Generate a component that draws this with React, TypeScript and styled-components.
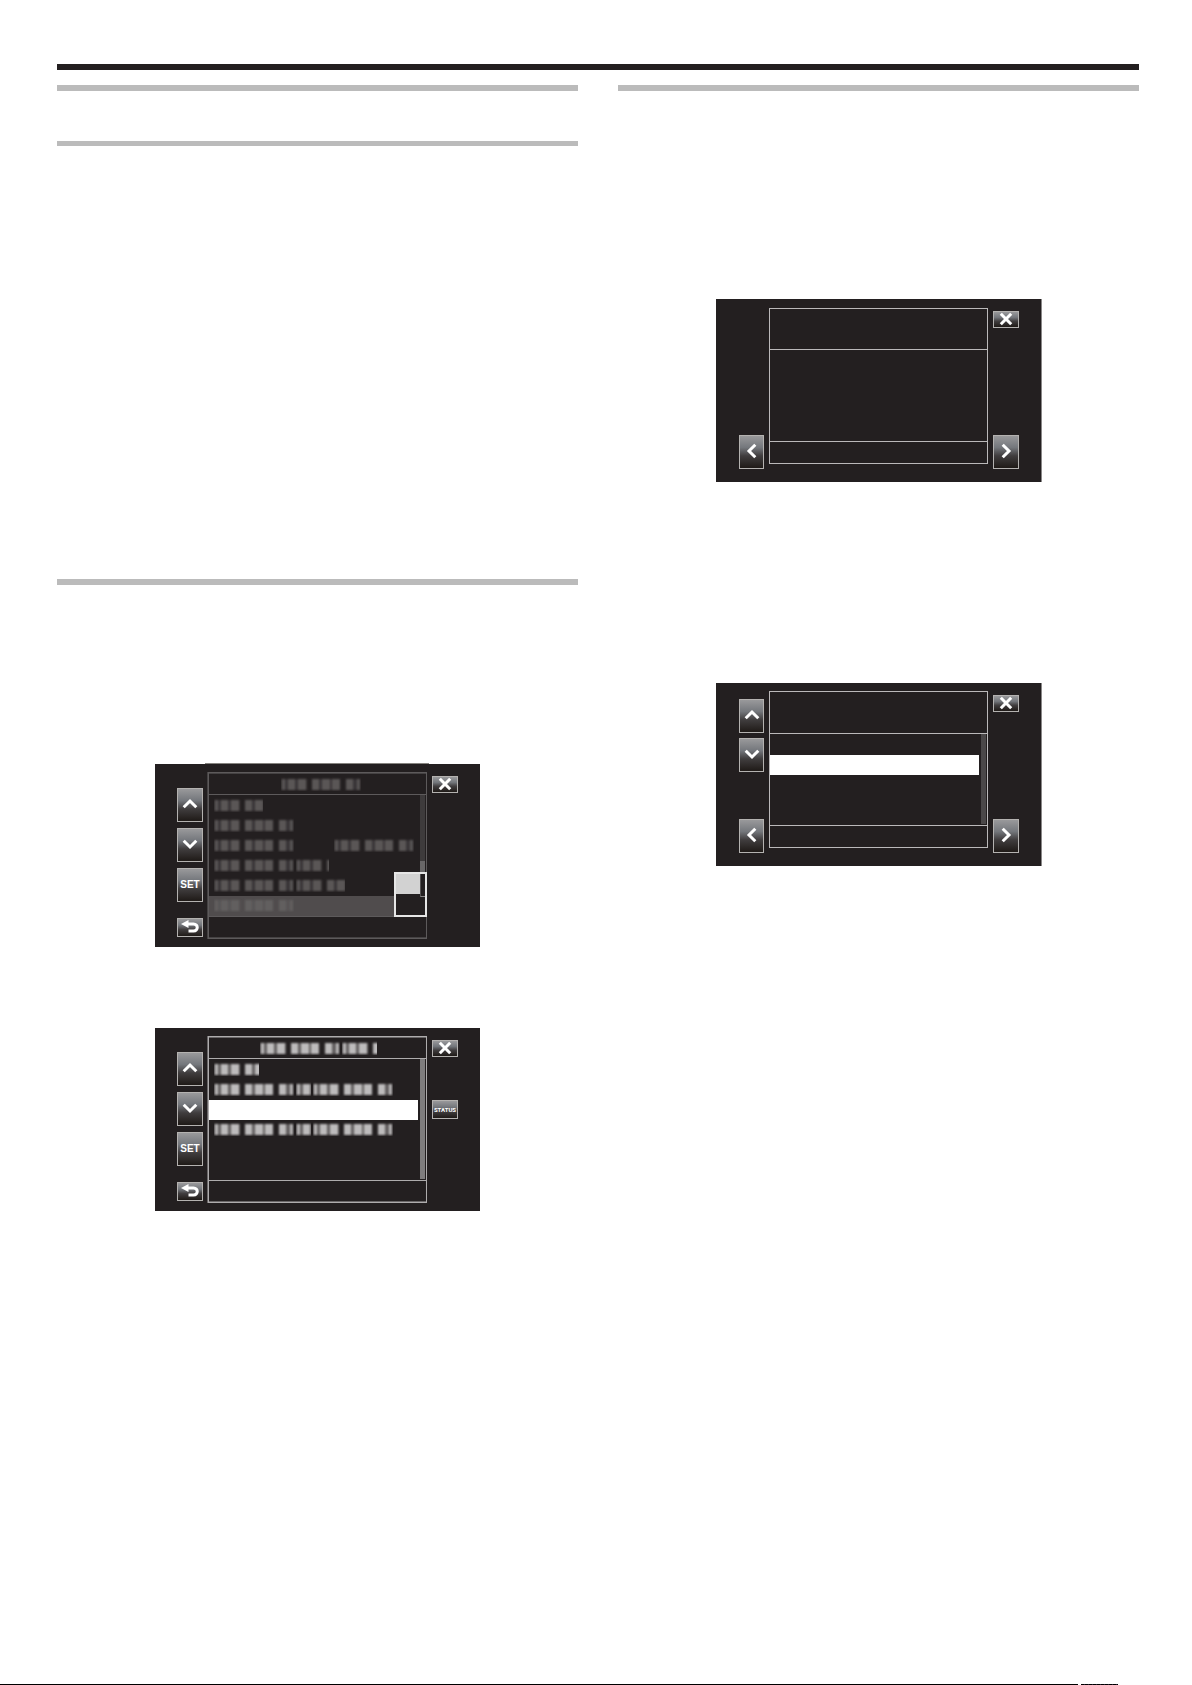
import React from "react";
import styled, { createGlobalStyle, css } from "styled-components";

const ink = "#231f20";

const GlobalStyle = createGlobalStyle`
  *, *::before, *::after { box-sizing: border-box; }
  body {
    margin: 0;
    background: #fff;
    font-family: "Liberation Sans", Arial, sans-serif;
  }
`;

const Page = styled.div`
  display: flex;
  flex-direction: column;
  min-height: 100vh;
  padding-top: 64px;
`;

const Sheet = styled.main`
  margin: 0 53px 0 57px;
  border-top: 6px solid ${ink};
  padding-top: 15px;
  display: grid;
  grid-template-columns: 1fr 1fr;
  column-gap: 40px;
`;

const Column = styled.div`
  display: flex;
  flex-direction: column;
`;

const Section = styled.section<{ $rule?: number; $top?: number; $bottom?: number; $gap?: number }>`
  display: flex;
  flex-direction: column;
  align-items: center;
  border-top: ${(p) => p.$rule ?? 6}px solid #bbb;
  padding-top: ${(p) => p.$top ?? 0}px;
  padding-bottom: ${(p) => p.$bottom ?? 0}px;
  gap: ${(p) => p.$gap ?? 0}px;
`;

const Screen = styled.div<{ $edge?: boolean; $lip?: boolean }>`
  position: relative;
  display: grid;
  grid-template-columns: ${(p) => (p.$edge ? "25px" : "26px")} 219px 26px;
  column-gap: 5px;
  width: 325px;
  height: 183px;
  padding: 0 22px 0 ${(p) => (p.$edge ? 23 : 22)}px;
  background: ${ink};
  ${(p) => p.$edge && css`box-shadow: 1px 0 0 #8a8888;`}
  ${(p) =>
    p.$lip &&
    css`
      &::before {
        content: "";
        position: absolute;
        left: 50px;
        right: 51px;
        top: -1px;
        height: 1px;
        background: #85837f;
      }
    `}
`;

const Side = styled.div<{ $top: number; $bottom: number; $gap?: number }>`
  display: flex;
  flex-direction: column;
  gap: ${(p) => p.$gap ?? 6}px;
  padding: ${(p) => p.$top}px 0 ${(p) => p.$bottom}px;
`;

const Key = styled.button<{ $h?: number; $end?: boolean }>`
  display: flex;
  align-items: center;
  justify-content: center;
  width: 100%;
  height: ${(p) => p.$h ?? 34}px;
  flex: none;
  margin: ${(p) => (p.$end ? "auto" : "0")} 0 0;
  padding: 0;
  border: 1px solid #b4b2b0;
  background: linear-gradient(#99999b 0%, #74777c 36%, #403d3e 62%, #1f1a17 100%);
  color: #fff;
  font: bold 10px/12px "Liberation Sans", Arial, sans-serif;
`;

const StatusKey = styled(Key)`
  margin-top: 37px;
  font: bold 6px/10px Roboto, "Liberation Sans", sans-serif;
`;

const Frame = styled.div<{ $line: string; $soft?: string; $top?: number; $height?: number; $head?: number }>`
  --line: ${(p) => p.$line};
  position: relative;
  display: grid;
  grid-template-rows: ${(p) => p.$head ?? 22}px 1fr 22px;
  margin-top: ${(p) => p.$top ?? 8}px;
  height: ${(p) => p.$height ?? 167}px;
  border: 1px solid var(--line);
  ${(p) => p.$soft && css`box-shadow: inset 0 1px 0 ${p.$soft}, inset 0 -1px 0 ${p.$soft}, -1px 0 0 ${p.$soft};`}
`;

const Header = styled.div<{ $inset?: number }>`
  display: flex;
  align-items: center;
  padding-left: ${(p) => p.$inset ?? 0}px;
  border-bottom: 1px solid var(--line);
`;

const Body = styled.div`
  display: flex;
  gap: 2px;
  padding-right: 1px;
`;

const Footer = styled.div`
  border-top: 1px solid var(--line);
`;

const List = styled.div`
  flex: 1;
  padding-top: 1px;
`;

const Row = styled.div<{ $fill?: string }>`
  display: flex;
  align-items: flex-start;
  justify-content: space-between;
  height: 20px;
  padding: 2px 4px 0 5px;
  background: ${(p) => p.$fill ?? "transparent"};
`;

const Track = styled.div<{ $color: string }>`
  display: flex;
  flex-direction: column;
  width: 5px;
  margin-bottom: 1px;
  background: ${(p) => p.$color};
`;

const Thumb = styled.div`
  height: 35px;
  margin-top: 66px;
  background: #696768;
`;

const Popup = styled.div`
  position: absolute;
  right: -1px;
  bottom: 21px;
  display: grid;
  grid-template-columns: 24px 1fr;
  grid-template-rows: 20px 1fr;
  width: 33px;
  height: 45px;
  border: 2px solid #e6e6e6;
  background: ${ink};
`;

const PopupChoice = styled.div`
  background: #d2d2d2;
`;

const PopupEdge = styled.div`
  grid-column: 2;
  grid-row: 1 / 3;
  height: 23px;
  border-left: 1px solid #555253;
  border-bottom: 1px solid #8a8889;
`;

const Line = styled.div`
  display: flex;
  gap: 2px;
`;

const PageFoot = styled.footer`
  display: flex;
  gap: 3px;
  height: 1px;
  margin-top: auto;
  padding-right: 74px;
`;

const FootBar = styled.div`
  flex: 1;
  background: #000;
`;

const FootMark = styled.div`
  width: 37px;
  background: repeating-linear-gradient(90deg, #000 0 3px, #2a2233 3px 4px);
`;

/* Softened glyph blocks: [x, width] pairs inside an 80px word group */
const blocks: [number, number][] = [
  [1, 3], [7, 7], [17, 8], [31, 7], [41, 8], [51, 8], [65, 7], [76, 3],
];

function Mosaic({ color, parts = [80] }: { color: string; parts?: number[] }) {
  return (
    <Line>
      {parts.map((w, i) => (
        <svg key={i} width={w} height="14" viewBox={`0 0 ${w} 14`} aria-hidden="true">
          <defs>
            <filter id="soft" x="-10%" y="-30%" width="120%" height="160%">
              <feGaussianBlur stdDeviation="1" />
            </filter>
          </defs>
          <g fill={color} filter="url(#soft)">
            <rect x="0" y="2" width="26" height="11" opacity=".4" />
            <rect x="31" y="2" width="28" height="11" opacity=".4" />
            <rect x="65" y="2" width="14" height="11" opacity=".4" />
            {blocks.map(([x, bw]) => (
              <rect key={x} x={x} y="2" width={bw} height="11" />
            ))}
          </g>
        </svg>
      ))}
    </Line>
  );
}

const turns = { up: 0, right: 90, down: 180, left: 270 };

function Chevron({ to }: { to: keyof typeof turns }) {
  return (
    <svg width="16" height="18" viewBox="0 0 16 18" fill="none" stroke="#fff" strokeWidth="3" aria-hidden="true">
      <path d="M1.7 11.3 8 5 14.3 11.3" transform={`rotate(${turns[to]} 8 8)`} />
    </svg>
  );
}

function ArrowKey({ to, end }: { to: keyof typeof turns; end?: boolean }) {
  return (
    <Key type="button" aria-label={to} $end={end}>
      <Chevron to={to} />
    </Key>
  );
}

function CloseKey() {
  return (
    <Key type="button" aria-label="close" $h={17}>
      <svg width="14" height="15" viewBox="0 0 14 15" stroke="#fff" strokeWidth="3" aria-hidden="true">
        <path d="M1.8 1.8 12.2 12.2M12.2 1.8 1.8 12.2" />
      </svg>
    </Key>
  );
}

function MenuKeys() {
  return (
    <Side $top={24} $bottom={10}>
      <ArrowKey to="up" />
      <ArrowKey to="down" />
      <Key type="button">SET</Key>
      <Key type="button" aria-label="back" $h={19} $end>
        <svg width="20" height="17" viewBox="0 0 20 17" fill="none" aria-hidden="true">
          <path d="M1 5 8.5 1V9Z" fill="#fff" />
          <path d="M7 5H13.5C18.5 5 18.5 12 13.5 12H8.5" stroke="#fff" strokeWidth="3" />
        </svg>
      </Key>
    </Side>
  );
}

const dim = "#5a5657";
const lit = "#bdbbbc";

export default function App() {
  return (
    <>
      <GlobalStyle />
      <Page>
        <Sheet>
          <Column>
            <Section $bottom={50} />
            <Section $rule={5} $bottom={433} />
            <Section $top={179} $gap={81}>
              <Screen $lip>
                <MenuKeys />
                <Frame $line="#5d5a5b" $soft="#454243">
                  <Header $inset={72}>
                    <Mosaic color={dim} />
                  </Header>
                  <Body>
                    <List>
                      <Row><Mosaic color={dim} parts={[49]} /></Row>
                      <Row><Mosaic color={dim} /></Row>
                      <Row>
                        <Mosaic color={dim} />
                        <Mosaic color={dim} />
                      </Row>
                      <Row><Mosaic color={dim} parts={[80, 33]} /></Row>
                      <Row><Mosaic color={dim} parts={[80, 49]} /></Row>
                      <Row $fill="#504c4d"><Mosaic color="#625e5f" /></Row>
                    </List>
                    <Track $color="#3e3b3c"><Thumb /></Track>
                  </Body>
                  <Footer />
                  <Popup>
                    <PopupChoice />
                    <PopupEdge />
                  </Popup>
                </Frame>
                <Side $top={12} $bottom={13}>
                  <CloseKey />
                </Side>
              </Screen>

              <Screen>
                <MenuKeys />
                <Frame $line="#aeacad" $soft="#6a6768">
                  <Header $inset={51}>
                    <Mosaic color={lit} parts={[80, 35]} />
                  </Header>
                  <Body>
                    <List>
                      <Row><Mosaic color={lit} parts={[45]} /></Row>
                      <Row><Mosaic color={lit} parts={[80, 15, 80]} /></Row>
                      <Row $fill="#fff" />
                      <Row><Mosaic color={lit} parts={[80, 15, 80]} /></Row>
                    </List>
                    <Track $color="#7f7d7e" />
                  </Body>
                  <Footer />
                </Frame>
                <Side $top={12} $bottom={13}>
                  <CloseKey />
                  <StatusKey type="button" $h={19}>STATUS</StatusKey>
                </Side>
              </Screen>
            </Section>
          </Column>

          <Column>
            <Section $top={208} $gap={201}>
              <Screen $edge>
                <Side $top={16} $bottom={13}>
                  <ArrowKey to="left" end />
                </Side>
                <Frame $line="#bbb9ba" $top={9} $height={156} $head={41}>
                  <Header />
                  <Body />
                  <Footer />
                </Frame>
                <Side $top={12} $bottom={13}>
                  <CloseKey />
                  <ArrowKey to="right" end />
                </Side>
              </Screen>

              <Screen $edge>
                <Side $top={16} $bottom={13} $gap={5}>
                  <ArrowKey to="up" />
                  <ArrowKey to="down" />
                  <ArrowKey to="left" end />
                </Side>
                <Frame $line="#bbb9ba" $height={157} $head={42}>
                  <Header />
                  <Body>
                    <List>
                      <Row />
                      <Row $fill="#fff" />
                    </List>
                    <Track $color="#4b4849" />
                  </Body>
                  <Footer />
                </Frame>
                <Side $top={12} $bottom={13}>
                  <CloseKey />
                  <ArrowKey to="right" end />
                </Side>
              </Screen>
            </Section>
          </Column>
        </Sheet>
        <PageFoot>
          <FootBar />
          <FootMark />
        </PageFoot>
      </Page>
    </>
  );
}
